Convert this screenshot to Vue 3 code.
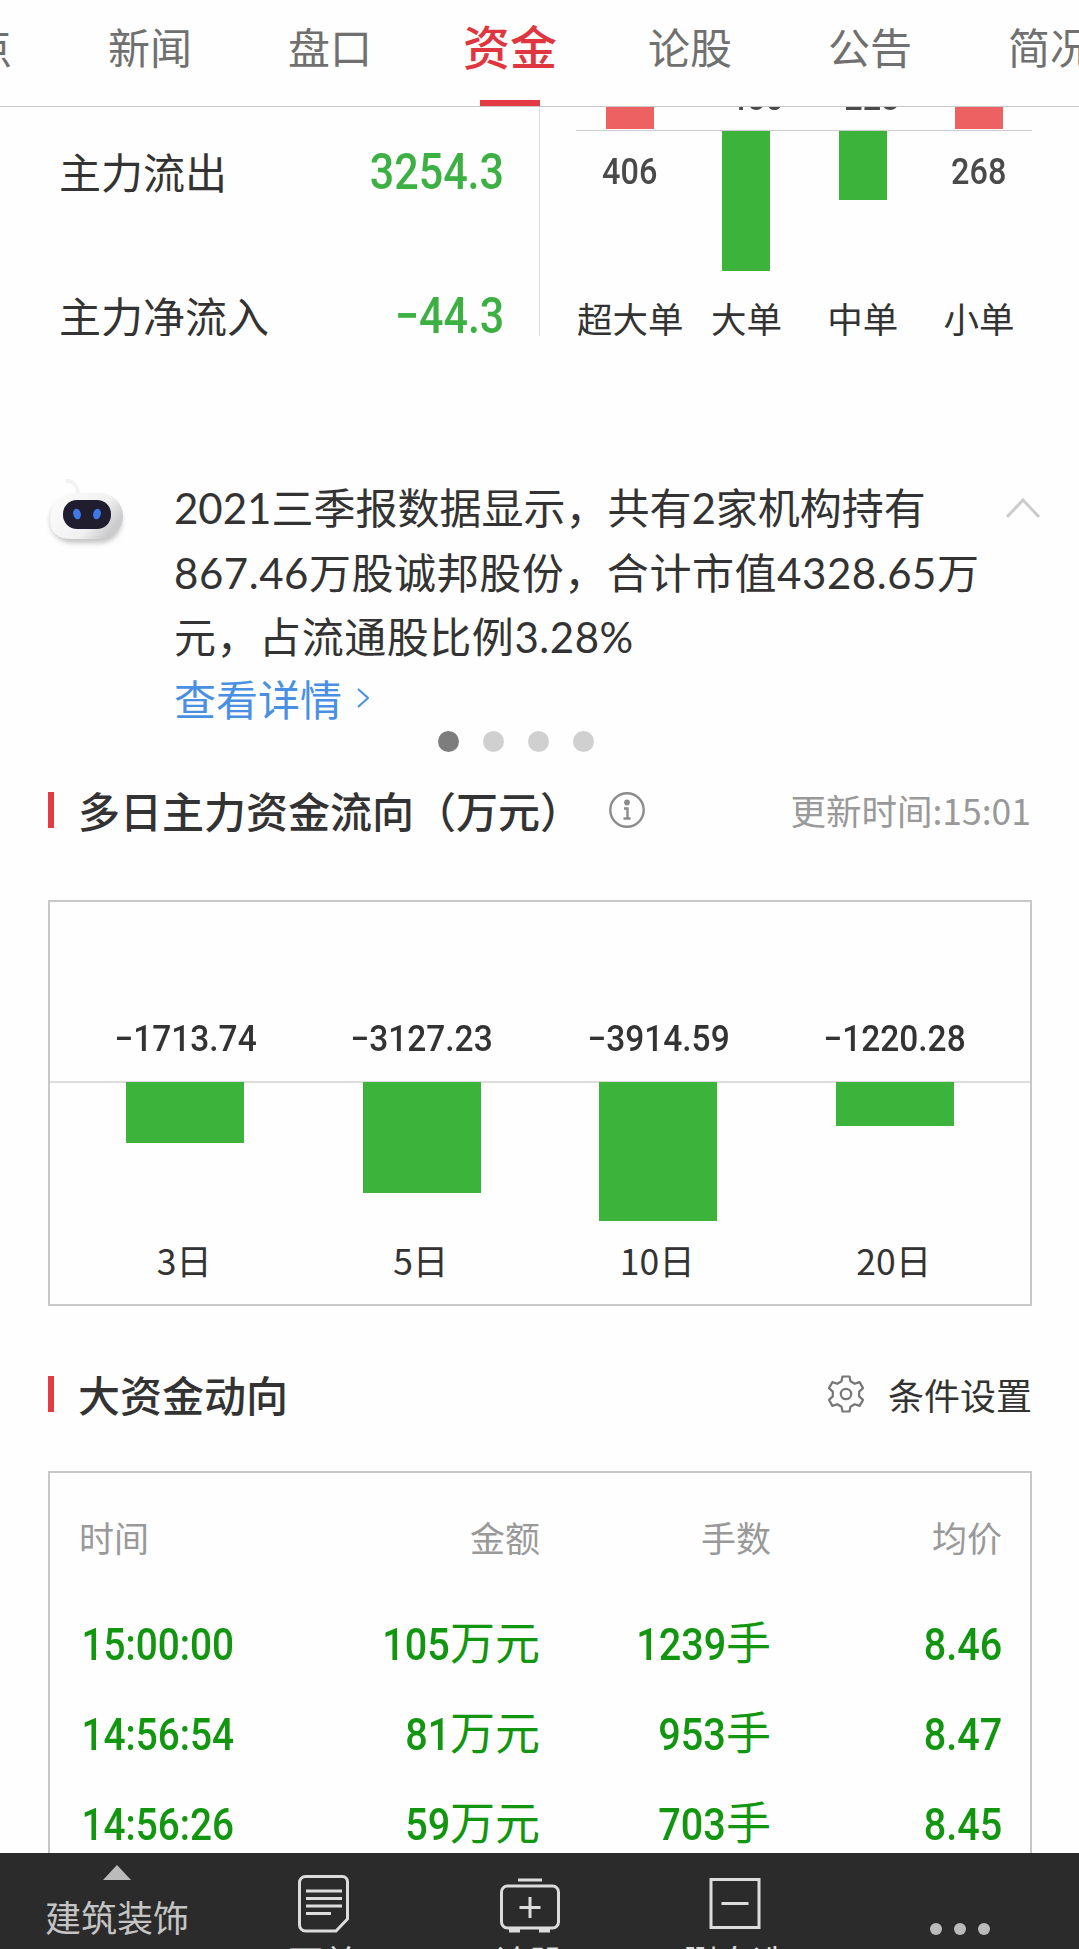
<template>
  <div class="page">
    <nav class="tabs">
      <a
        v-for="tab in tabs"
        :key="tab"
        class="tab"
        :class="{ active: tab === activeTab }"
        @click="activeTab = tab"
        >{{ tab }}</a
      >
    </nav>

    <!-- Main fund flow, scrolled under the tabs -->
    <section class="flow">
      <div class="flow-list">
        <div v-for="row in flowRows" :key="row.label" class="flow-row">
          <span>{{ row.label }}</span>
          <span class="num flow-value">{{ row.value }}</span>
        </div>
      </div>
      <div class="orders">
        <div v-for="o in orders" :key="o.label" class="order">
          <div class="order-up">
            <i v-if="o.up" class="order-bar up"></i>
            <span v-else class="num order-value">{{ o.value }}</span>
          </div>
          <div class="order-down">
            <span v-if="o.up" class="num order-value">{{ o.value }}</span>
            <i v-else class="order-bar" :style="{ height: o.height + 'px' }"></i>
          </div>
          <span class="order-label">{{ o.label }}</span>
        </div>
      </div>
    </section>

    <!-- Assistant tip -->
    <section class="tip">
      <svg class="robot" width="84" height="84" viewBox="0 0 84 84">
        <defs>
          <linearGradient id="shell" x1="0" y1="0" x2="1" y2="0.5">
            <stop offset="0" stop-color="#fcfcfc" />
            <stop offset="0.7" stop-color="#f1f1f2" />
            <stop offset="1" stop-color="#cbcbcd" />
          </linearGradient>
          <filter id="soft" x="-20%" y="-20%" width="140%" height="150%">
            <feGaussianBlur stdDeviation="2.5" />
          </filter>
        </defs>
        <path d="M20 14q11-1 12 14" fill="none" stroke="#f3f3f3" stroke-width="4" />
        <rect x="4" y="32" width="72" height="44" rx="22" fill="#c4c4c4" filter="url(#soft)" />
        <path
          d="M28 26h26a23 23 0 0 1 0 46H26C12 72 4 66 4 54C4 38 12 26 28 26z"
          fill="url(#shell)"
        />
        <rect x="17" y="33" width="48" height="29" rx="14" fill="#1f1d2e" />
        <ellipse cx="31" cy="47" rx="3.8" ry="5.4" fill="#4178e8" transform="rotate(-12 31 47)" />
        <ellipse cx="51" cy="47" rx="3.8" ry="5.4" fill="#4178e8" transform="rotate(12 51 47)" />
      </svg>
      <div class="tip-body">
        <p class="tip-text">
          <span>2021三季报数据显示，共有2家机构持有</span>
          <span class="wide">867.46万股诚邦股份，合计市值4328.65万</span>
          <span class="wide">元，占流通股比例3.28%</span>
        </p>
        <a class="tip-link">
          查看详情
          <svg width="12" height="20" viewBox="0 0 12 20">
            <path d="M1 1l10 9-10 9" fill="none" stroke="#4a90e2" stroke-width="2" />
          </svg>
        </a>
      </div>
      <svg class="collapse" width="34" height="20" viewBox="0 0 34 20">
        <path d="M1 19L17 2l16 17" fill="none" stroke="#cccccc" stroke-width="3" />
      </svg>
    </section>
    <div class="dots">
      <i v-for="n in 4" :key="n" :class="{ on: n === 1 }"></i>
    </div>

    <!-- Multi-day flow chart -->
    <header class="head">
      <h2>多日主力资金流向（万元）</h2>
      <svg class="info" width="38" height="38" viewBox="0 0 38 38" fill="none" stroke="#8c8c8c">
        <circle cx="19" cy="19" r="16.7" stroke-width="2.4" />
        <circle cx="19" cy="11.5" r="2.9" fill="#8c8c8c" stroke="none" />
        <path d="M16 17.5h3.5V27M15.5 27.5h7" stroke-width="2.4" />
      </svg>
      <span class="updated">更新时间:15:01</span>
    </header>
    <section class="box chart">
      <div v-for="d in days" :key="d.label" class="day">
        <span class="num day-value">{{ d.value }}</span>
        <div class="day-track">
          <i class="day-bar" :style="{ height: d.height + 'px' }"></i>
        </div>
        <span class="day-label">{{ d.label }}</span>
      </div>
    </section>

    <!-- Large trades -->
    <header class="head second">
      <h2>大资金动向</h2>
      <a class="settings">
        <svg width="38" height="38" viewBox="0 0 38 38" fill="none" stroke="#777777" stroke-width="2.2">
          <path
            stroke-linejoin="round"
            d="M15.500 1.500h7l1 4.800 4.200 2.500 4.900-1.700 3.400 6-3.800 3.500v4.800l3.800 3.500-3.400 6-4.900-1.700-4.200 2.500-1 4.800h-7l-1-4.800-4.200-2.500-4.900 1.700-3.400-6 3.800-3.500v-4.800l-3.800-3.500 3.400-6 4.900 1.700 4.200-2.500z"
          />
          <circle cx="19" cy="19" r="5.2" />
        </svg>
        条件设置
      </a>
    </header>
    <section class="box trades">
      <div class="trade trade-head">
        <span>时间</span><span>金额</span><span>手数</span><span>均价</span>
      </div>
      <div v-for="t in trades" :key="t.time" class="trade">
        <span><b class="num">{{ t.time }}</b></span>
        <span><b class="num">{{ t.amount }}</b>万元</span>
        <span><b class="num">{{ t.lots }}</b>手</span>
        <span><b class="num">{{ t.price }}</b></span>
      </div>
    </section>

    <footer class="bar">
      <div class="bar-item industry">
        <i class="caret"></i>
        <span>建筑装饰</span>
      </div>
      <div class="bar-item">
        <svg width="60" height="64" viewBox="0 0 60 64" fill="none" stroke="#dcdcdc" stroke-width="3">
          <path d="M12.500 4.500h37a5 5 0 0 1 5 5V47L43 59H12.500a6 6 0 0 1-6-6V10.500a6 6 0 0 1 6-6z" />
          <path d="M13 19h36M13 26.500h36M13 34h36M13 41.500h25" />
        </svg>
        <span>下单</span>
      </div>
      <div class="bar-item">
        <svg width="64" height="64" viewBox="0 0 64 64" fill="none" stroke="#dcdcdc" stroke-width="3">
          <path d="M21 8h24" />
          <rect x="4.500" y="14" width="57" height="42" rx="6" />
          <path d="M33 25v21M22.500 35.500h21" />
          <path d="M12 58.500h11M42 58.500h11" stroke-width="4" />
        </svg>
        <span>诊股</span>
      </div>
      <div class="bar-item">
        <svg width="64" height="64" viewBox="0 0 64 64" fill="none" stroke="#dcdcdc" stroke-width="3">
          <rect x="8" y="7.500" width="48" height="48" />
          <path d="M18.500 31.500h27" />
        </svg>
        <span>删自选</span>
      </div>
      <div class="bar-item more"><i></i><i></i><i></i></div>
    </footer>
  </div>
</template>

<script setup>
import { ref } from "vue";

const tabs = ["观点", "新闻", "盘口", "资金", "论股", "公告", "简况"];
const activeTab = ref("资金");

const flowRows = [
  { label: "主力流出", value: "3254.3" },
  { label: "主力净流入", value: "−44.3" },
];

const orders = [
  { label: "超大单", value: "406", up: true },
  { label: "大单", value: "−450", height: 140 },
  { label: "中单", value: "−223", height: 69 },
  { label: "小单", value: "268", up: true },
];

const days = [
  { label: "3日", value: "−1713.74", height: 61 },
  { label: "5日", value: "−3127.23", height: 111 },
  { label: "10日", value: "−3914.59", height: 139 },
  { label: "20日", value: "−1220.28", height: 44 },
];

const trades = [
  { time: "15:00:00", amount: 105, lots: 1239, price: "8.46" },
  { time: "14:56:54", amount: 81, lots: 953, price: "8.47" },
  { time: "14:56:26", amount: 59, lots: 703, price: "8.45" },
];
</script>

<style>
body {
  margin: 0;
  background: #fefefe;
}
</style>

<style scoped>
.page {
  display: flex;
  flex-direction: column;
  width: 1079px;
  height: 1949px;
  overflow: hidden;
  background: #fefefe;
  color: #333;
  font-family: "Noto Sans CJK SC", sans-serif;
  font-size: 42px;
  line-height: 1;
}

.page > * {
  flex-shrink: 0;
  box-sizing: border-box;
}

i,
b {
  font-style: normal;
  font-weight: inherit;
}

svg {
  display: block;
  flex-shrink: 0;
}

/* narrow digits */
.num {
  display: inline-block;
  font-family: Roboto, "Noto Sans CJK SC", sans-serif;
  font-weight: 500;
  transform: scaleX(0.9);
}

.tabs {
  display: flex;
  height: 107px;
  margin-left: -120px;
  border-bottom: 1px solid #c8c8c8;
}

.tab {
  position: relative;
  flex: 0 0 180px;
  height: 106px;
  color: #707070;
  line-height: 91px;
  text-align: center;
}

.tab.active {
  color: #e0363f;
  font-size: 47px;
  font-weight: 500;
  line-height: 89px;
}

.tab.active::after {
  content: "";
  position: absolute;
  bottom: 0;
  left: 60px;
  width: 60px;
  height: 6px;
  background: #e33a44;
}

.flow {
  display: flex;
  height: 229px;
  overflow: hidden;
}

.flow-list {
  display: flex;
  flex-direction: column;
  box-sizing: border-box;
  width: 540px;
  padding: 38px 35px 0 59px;
  border-right: 1px solid #ddd;
}

.flow-row {
  display: flex;
  flex-shrink: 0;
  justify-content: space-between;
  align-items: center;
  height: 52px;
  margin-bottom: 92px;
}

.flow-row:last-child {
  margin-bottom: 0;
}

.flow-value {
  padding-top: 2px;
  color: #3cb043;
  font-size: 50px;
  transform: scaleX(0.86);
  transform-origin: right;
}

.orders {
  display: flex;
  width: 456px;
  margin-left: 36px;
  background: linear-gradient(#ccc, #ccc) 0 23px / 456px 1px no-repeat;
}

.order {
  display: flex;
  flex: 0 0 116.300px;
  flex-direction: column;
  align-items: center;
  margin-right: 4px;
  margin-left: -4px;
}

.order-up {
  display: flex;
  flex-direction: column;
  flex-shrink: 0;
  justify-content: flex-end;
  height: 22px;
}

.order-up .order-value {
  margin-bottom: 13px;
}

.order-bar {
  display: block;
  width: 48px;
  background: #3cb43c;
}

.order-bar.up {
  height: 22px;
  background: #ee6163;
}

.order-down {
  flex-shrink: 0;
  height: 169px;
  padding-top: 2px;
}

.order-down .order-value {
  margin-top: 23px;
}

.order-value {
  color: #4a4a4a;
  font-size: 36px;
}

.order-label {
  font-size: 35.500px;
  white-space: nowrap;
}

.tip {
  display: flex;
  height: 260px;
  margin-top: 131px;
  padding-left: 46px;
}

.tip-body {
  width: 832px;
  margin-left: 44px;
  padding-top: 9px;
}

.tip-text {
  display: flex;
  flex-direction: column;
  margin: 0;
  font-family: Lato, "Noto Sans CJK SC", sans-serif;
  line-height: 64.500px;
  white-space: nowrap;
}

.tip-text .wide {
  letter-spacing: 0.55px;
}

.tip-link {
  display: flex;
  align-items: center;
  gap: 15px;
  margin-top: -2px;
  color: #4a90e2;
  line-height: 60px;
}

.collapse {
  margin-top: 31px;
}

.dots {
  display: flex;
  gap: 24px;
  height: 21px;
  margin: 4px 0 0 438px;
}

.dots i {
  width: 21px;
  height: 21px;
  border-radius: 50%;
  background: #d0d0d0;
}

.dots .on {
  background: #7d7d7d;
}

.head {
  display: flex;
  align-items: center;
  height: 38px;
  margin: 39px 47px 0 48px;
}

.head::before {
  content: "";
  width: 6px;
  height: 36px;
  margin-right: 24px;
  background: #e33a44;
}

.head.second {
  margin-top: 69px;
}

h2 {
  margin: 0;
  font-size: 42px;
  font-weight: 500;
}

.info {
  margin-left: 26px;
}

.updated {
  margin-left: auto;
  padding-right: 1px;
  color: #999;
  font-size: 35.500px;
}

.settings {
  display: flex;
  align-items: center;
  gap: 23px;
  margin-left: auto;
  font-size: 36px;
}

.box {
  width: 984px;
  margin-left: 48px;
  border: 2px solid #c8c8c8;
}

.chart {
  display: flex;
  height: 406px;
  margin-top: 71px;
  padding: 0 17px;
  background: linear-gradient(#ddd, #ddd) 0 179px / 100% 2px no-repeat;
}

.day {
  display: flex;
  flex: 1;
  flex-direction: column;
  align-items: center;
}

.day-value {
  height: 36px;
  margin: 119px 0 25px;
  font-size: 36px;
  transform: scaleX(0.93);
}

.day-track {
  height: 160px;
}

.day-bar {
  display: block;
  width: 118px;
  background: #3cb43c;
}

.day-label {
  padding-right: 2px;
  font-size: 35.500px;
}

.trades {
  height: 382px;
  margin-top: 58px;
  padding: 18px 28px 0 29px;
  border-bottom: 0;
}

.trade {
  display: grid;
  grid-template-columns: 230px 231px 231px 231px;
  align-items: center;
  height: 90px;
  color: #12960f;
  font-size: 45px;
  text-align: right;
  white-space: nowrap;
}

.trade span:first-child {
  text-align: left;
}

.trade .num {
  transform: scaleX(0.88);
  transform-origin: right;
}

.trade span:first-child .num {
  padding-left: 3px;
  transform: scaleX(0.86);
  transform-origin: left;
}

.trade-head {
  box-sizing: border-box;
  height: 106px;
  padding-bottom: 16px;
  color: #999;
  font-size: 35px;
}

.bar {
  display: flex;
  height: 97px;
  padding-left: 14px;
  background: #2b2b2b;
  color: #dcdcdc;
  font-size: 35px;
}

.bar-item {
  display: flex;
  flex: 0 0 206px;
  flex-direction: column;
  align-items: center;
  box-sizing: border-box;
  padding-top: 19px;
}

.bar-item span {
  margin-top: 7px;
  white-space: nowrap;
}

.industry {
  padding-top: 12px;
  color: #c4c4c4;
  font-size: 36px;
}

.industry span {
  margin-top: 18px;
}

.caret {
  border: 14px solid transparent;
  border-top: 0;
  border-bottom: 15px solid #bbb;
}

.more {
  flex: 1;
  flex-direction: row;
  justify-content: center;
  align-items: flex-start;
  gap: 12px;
  padding-top: 70px;
  padding-left: 3px;
}

.more i {
  width: 12px;
  height: 12px;
  border-radius: 50%;
  background: #bbb;
}
</style>
